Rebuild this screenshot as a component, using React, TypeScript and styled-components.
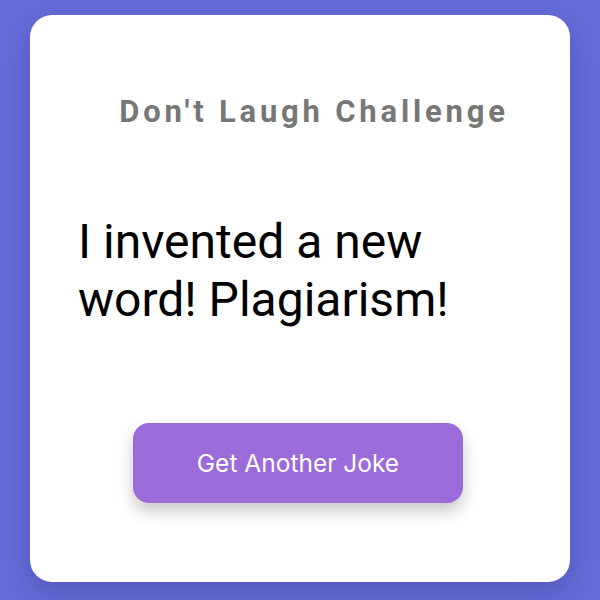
import React from "react";
import styled, { createGlobalStyle } from "styled-components";

const GlobalStyle = createGlobalStyle`
  html, body {
    margin: 0;
    padding: 0;
    background: #656dd9;
  }
  * { box-sizing: border-box; }
`;

const Page = styled.main`
  min-height: 100vh;
  display: flex;
  justify-content: center;
  align-items: flex-start;
  padding: 15px 30px 18px;
`;

const Card = styled.section`
  width: 540px;
  background: #ffffff;
  border-radius: 22px;
  box-shadow: 0 10px 30px rgba(30, 20, 90, 0.25);
  padding: 78px 48px 79px;
  display: flex;
  flex-direction: column;
`;

const Title = styled.h1`
  margin: 0 0 83px;
  font-family: Roboto, "Noto Sans", sans-serif;
  font-weight: 700;
  font-size: 31px;
  line-height: 1.2;
  letter-spacing: 3.8px;
  color: #777777;
  text-align: center;
  padding-left: 28px;
`;

const Joke = styled.p`
  margin: 0 0 95px;
  font-family: Roboto, "Noto Sans", sans-serif;
  font-weight: 400;
  font-size: 48px;
  line-height: 1.2;
  color: #000000;
`;

const Button = styled.button`
  align-self: center;
  width: 330px;
  height: 80px;
  border: none;
  border-radius: 16px;
  background: #9b6bd9;
  color: #ffffff;
  font-family: Inter, "Liberation Sans", sans-serif;
  font-size: 24.5px;
  font-weight: 400;
  box-shadow: 0 8px 16px rgba(0, 0, 0, 0.22);
  cursor: pointer;
  margin-left: -4px;
`;

export default function App() {
  return (
    <>
      <GlobalStyle />
      <Page>
        <Card>
          <Title>Don't Laugh Challenge</Title>
          <Joke>I invented a new word! Plagiarism!</Joke>
          <Button>Get Another Joke</Button>
        </Card>
      </Page>
    </>
  );
}
